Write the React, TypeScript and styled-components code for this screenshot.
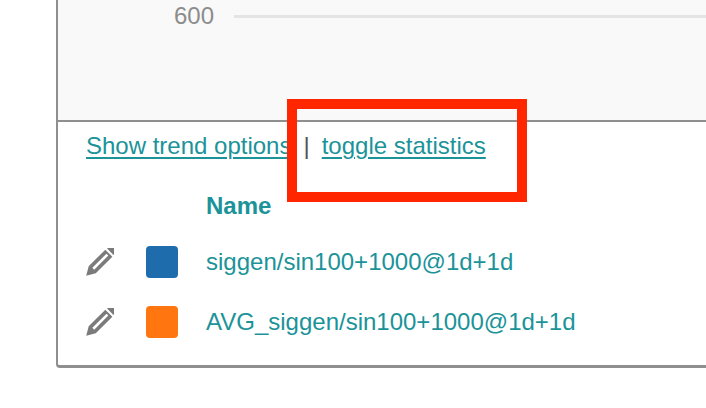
import React from "react";
import styled, { createGlobalStyle } from "styled-components";

const Global = createGlobalStyle`
  html, body { margin: 0; padding: 0; background: #fff; overflow: hidden; }
  body { font-family: "Liberation Sans", Arial, sans-serif; }
`;

const Page = styled.div`
  width: 706px;
  height: 408px;
  position: relative;
  overflow: hidden;
  background: #fff;
  padding-left: 56px;
  box-sizing: border-box;
`;

const Panel = styled.div`
  width: 700px;
  height: 369px;
  margin-top: -1px;
  box-sizing: border-box;
  border-left: 2px solid #8f8f8f;
  border-bottom: 3px solid #8f8f8f;
  border-bottom-left-radius: 4px;
  display: flex;
  flex-direction: column;
`;

const Chart = styled.div`
  height: 123px;
  flex: none;
  box-sizing: border-box;
  background: #f9f9f9;
  border-bottom: 2px solid #8f8f8f;
  padding-top: 1px;
`;

const AxisRow = styled.div`
  display: flex;
  align-items: center;
  height: 32px;
`;

const AxisLabel = styled.span`
  width: 156px;
  text-align: right;
  font-size: 24px;
  color: #8c8c8c;
`;

const GridLine = styled.div`
  flex: 1;
  height: 3px;
  margin-left: 20px;
  background: #e4e4e4;
`;

const Links = styled.div`
  display: flex;
  align-items: center;
  padding: 8px 0 0 28px;
  height: 32px;
  font-size: 24px;
  line-height: 32px;
  color: #555;
  white-space: pre;
`;

const LinkText = styled.a`
  color: #1b9399;
  text-decoration: underline;
  text-underline-offset: 3px;
  text-decoration-thickness: 2px;
`;

const Separator = styled.span`
  margin: 0 12px;
`;

const Table = styled.div`
  display: flex;
  flex-direction: column;
  padding: 28px 0 0 28px;
`;

const HeaderRow = styled.div`
  padding-left: 120px;
  height: 32px;
  line-height: 32px;
  margin-bottom: 24px;
  font-size: 24px;
  font-weight: 700;
  color: #1b9399;
`;

const Row = styled.div`
  display: flex;
  align-items: center;
  height: 32px;
  margin-bottom: 28px;
`;

const Edit = styled.svg`
  width: 28px;
  height: 28px;
  flex: none;
  margin-right: 2px;
`;

const Swatch = styled.span<{ $color: string }>`
  width: 32px;
  height: 32px;
  margin-left: 30px;
  margin-right: 28px;
  flex: none;
  border-radius: 4px;
  background: ${(p) => p.$color};
`;

const Name = styled.span`
  font-size: 24px;
  color: #1b9399;
`;

const Highlight = styled.div`
  position: absolute;
  left: 287px;
  top: 99px;
  width: 240px;
  height: 103px;
  box-sizing: border-box;
  border: 10px solid #ff2600;
`;

const Pencil = () => (
  <Edit viewBox="0 0 28 28" aria-hidden="true">
    <g transform="rotate(45 14 14)" fill="#7b7b7b">
      <path d="M9.5 -0.5 V-2 a4.5 4 0 0 1 9 0 V-0.5 Z" />
      <path
        fillRule="evenodd"
        d="M9 1.5 H19 V25 L14 33.5 L9 25 Z M12.7 3.5 V23.5 H15.3 V3.5 Z"
      />
    </g>
  </Edit>
);

const series = [
  { name: "siggen/sin100+1000@1d+1d", color: "#1f6cad" },
  { name: "AVG_siggen/sin100+1000@1d+1d", color: "#ff7510" },
];

export default function App() {
  return (
    <Page>
      <Global />
      <Panel>
        <Chart>
          <AxisRow>
            <AxisLabel>600</AxisLabel>
            <GridLine />
          </AxisRow>
        </Chart>
        <Links>
          <LinkText>Show trend options</LinkText>
          <Separator>|</Separator>
          <LinkText>toggle statistics</LinkText>
        </Links>
        <Table>
          <HeaderRow>Name</HeaderRow>
          {series.map((s) => (
            <Row key={s.name}>
              <Pencil />
              <Swatch $color={s.color} />
              <Name>{s.name}</Name>
            </Row>
          ))}
        </Table>
      </Panel>
      <Highlight />
    </Page>
  );
}
